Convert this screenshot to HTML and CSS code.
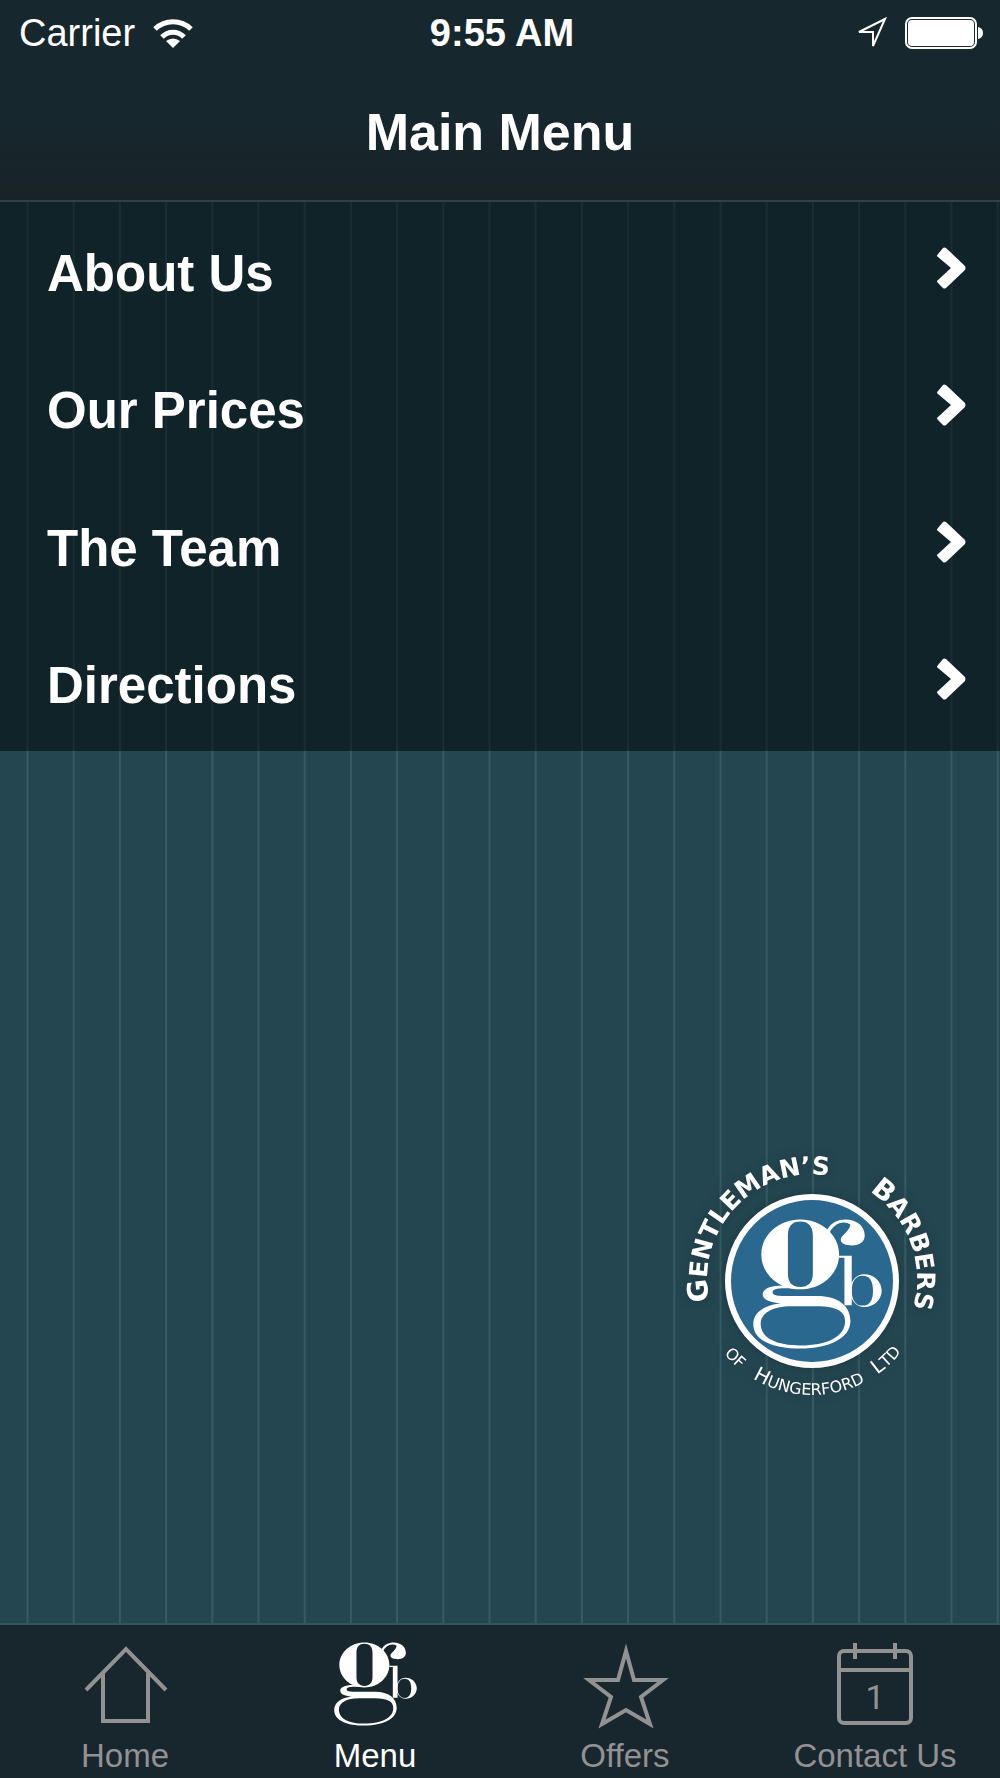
FILE: index.html
```
<!DOCTYPE html>
<html lang="en">
  <head>
    <meta charset="UTF-8" />
    <meta name="viewport" content="width=device-width, initial-scale=1.0" />
    <title>Main Menu</title>
    <link rel="stylesheet" href="styles.css">
  </head>
  <body>
    <svg class="defs" aria-hidden="true">
      <symbol id="gb" viewBox="248 236 388 390">
        <path fill-rule="evenodd" d="M390 237C455 237 507 284 507 342S455 447 390 447 273 400 273 342 325 237 390 237ZM390 243C366 243 353 257 353 285V400C353 426 366 440 390 440S428 426 428 400V285C428 257 414 243 390 243Z" />
        <path d="M468 276C478 246 505 237 526 237 565 237 584 262 584 285 584 304 568 315 546 315 527 315 512 310 512 298 512 284 537 275 541 252 520 238 488 248 475 284Z" />
        <path fill-rule="evenodd" d="M370 437C305 430 277 444 277 462 277 480 305 488 332 489 280 495 249 517 249 552 249 602 310 625 390 625 480 625 541 592 541 543 541 497 505 467 440 467H335C315 467 307 463 307 456 307 446 325 442 370 445ZM365 498C305 498 271 520 271 550 271 595 320 616 390 616 470 616 525 590 525 543 525 514 500 498 440 498Z" />
        <path d="M507 346H545V495H523V352H507Z" />
        <path fill-rule="evenodd" d="M582 402C612 402 635 424 635 451S612 500 582 500C558 500 540 478 540 451S558 402 582 402ZM578 406C556 406 545 424 545 451S556 496 578 496 609 478 609 451 600 406 578 406Z" />
      </symbol>
      <symbol id="chevron" viewBox="0 0 30 42">
        <path d="M2 7L7 1Q8 0 10 1L29 19Q30 21 29 23L10 41Q8 42 7 41L2 36Q0 34 2 33L15 21L2 10Q0 9 2 7Z" fill="currentColor" />
      </symbol>
    </svg>

    <header class="header">
      <div class="status-bar">
        <div class="carrier">
          <span>Carrier</span>
          <svg width="40" height="32" viewBox="0 0 40 32" fill="none" stroke="currentColor" stroke-width="5">
            <path d="M2 12A26 26 0 0 1 38 12" />
            <path d="M9 20A15 15 0 0 1 31 20" />
            <path d="M20 31L13 24Q20 19 27 24Z" fill="currentColor" stroke="none" />
          </svg>
        </div>
        <span class="time">9:55 AM</span>
        <div class="indicators">
          <svg width="34" height="34" viewBox="0 0 34 34" fill="none" stroke="currentColor" stroke-width="2">
            <path d="M30 3L4 16L18 16L18 30Z" />
          </svg>
          <svg width="80" height="32" viewBox="0 0 80 32">
            <rect x="1" y="1" width="70" height="30" rx="6" fill="none" stroke="currentColor" stroke-width="2" />
            <rect x="3" y="3" width="66" height="26" rx="4" fill="currentColor" />
            <path d="M73 10Q78 11 78 16T73 22Z" fill="currentColor" />
          </svg>
        </div>
      </div>
      <h1>Main Menu</h1>
    </header>

    <nav class="menu">
      <a href="#about">About Us <svg class="chevron"><use href="#chevron" /></svg></a>
      <a href="#prices">Our Prices <svg class="chevron"><use href="#chevron" /></svg></a>
      <a href="#team">The Team <svg class="chevron"><use href="#chevron" /></svg></a>
      <a href="#directions">Directions <svg class="chevron"><use href="#chevron" /></svg></a>
    </nav>

    <main class="content">
      <svg class="logo" viewBox="0 0 280 270">
        <path id="arcTop" d="M60 205A105 105 0 1 1 224 205" fill="none" />
        <path id="arcBottom" d="M28 141A114 114 0 0 0 256 141" fill="none" />
        <circle cx="142" cy="141" r="84" class="logo-disc" />
        <use href="#gb" x="83" y="79" width="129" height="130" />
        <g class="logo-name">
          <text><textPath href="#arcTop" startOffset="32%"><tspan class="cap">G</tspan>ENTLEMAN’S</textPath></text>
          <text><textPath href="#arcTop" startOffset="77%"><tspan class="cap">B</tspan>ARBERS</textPath></text>
        </g>
        <g class="logo-place">
          <text><textPath href="#arcBottom" startOffset="25%">OF</textPath></text>
          <text><textPath href="#arcBottom" startOffset="49%"><tspan class="cap">H</tspan>UNGERFORD</textPath></text>
          <text><textPath href="#arcBottom" startOffset="74%"><tspan class="cap">L</tspan>TD</textPath></text>
        </g>
      </svg>
    </main>

    <nav class="tabs">
      <a href="#home">
        <svg viewBox="0 0 88 88" class="icon line">
          <path d="M5 50L45 9L85 50" />
          <path d="M22 33V81H67V33" />
        </svg>
        Home
      </a>
      <a href="#menu" class="active">
        <svg viewBox="0 0 88 88" class="icon"><use href="#gb" x="3" y="2" width="83" height="84" /></svg>
        Menu
      </a>
      <a href="#offers">
        <svg viewBox="0 0 88 88" class="icon line">
          <path d="M45 11L53 40H82L60 57L69 84L45 70L21 84L30 57L8 40H37Z" />
        </svg>
        Offers
      </a>
      <a href="#contact">
        <svg viewBox="0 0 88 88" class="icon line">
          <rect x="8" y="11" width="72" height="72" rx="5" />
          <path d="M8 30H80M24 3V19M64 3V19" />
          <text x="44" y="69">1</text>
        </svg>
        Contact Us
      </a>
    </nav>
  </body>
</html>
```
FILE: styles.css
```
* {
  box-sizing: border-box;
}
body {
  display: flex;
  flex-direction: column;
  min-height: 100vh;
  margin: 0;
  font-family: "Helvetica Neue", "Liberation Sans", Arial, sans-serif;
  color: #fff;
  background: repeating-linear-gradient(90deg, #234651 0 2.6%, #355b65 2.7% 2.8%, #234651 2.9% 4.62%);
}
a {
  color: inherit;
  text-decoration: none;
}
svg {
  flex: none;
}
.defs {
  position: absolute;
  width: 0;
  height: 0;
}

/* header */
.header {
  background: linear-gradient(#17272e 60%, #182327);
  border-bottom: 2px solid #2f4146;
}
.status-bar {
  display: grid;
  grid-template-columns: 1fr auto 1fr;
  align-items: center;
  height: 66px;
  padding: 0 15px 0 19px;
  font-size: 38px;
  line-height: 66px;
}
.carrier,
.indicators {
  display: flex;
  align-items: center;
  gap: 18px;
}
.indicators {
  justify-content: flex-end;
  gap: 16px;
}
.time {
  font-weight: bold;
}
h1 {
  margin: 0;
  font-size: 52px;
  line-height: 132px;
  padding-bottom: 2px;
  text-align: center;
}

/* menu list */
.menu {
  display: grid;
  grid-auto-rows: 1fr;
  height: 549px;
  background: rgba(0, 3, 4, 0.52);
}
.menu a {
  display: flex;
  align-items: center;
  justify-content: space-between;
  padding: 6px 34px 0 47px;
  font-size: 51px;
  font-weight: bold;
}
.chevron {
  width: 30px;
  height: 42px;
  margin-bottom: 12px;
}

/* logo */
.content {
  display: flex;
  flex: 1;
  align-items: flex-end;
  justify-content: flex-end;
  padding: 0 50px 213px;
}
.logo {
  width: 280px;
  height: 270px;
  fill: #fff;
  font-family: "DejaVu Sans", sans-serif;
  text-anchor: middle;
  filter: drop-shadow(0 0 5px rgba(30, 40, 40, 0.5));
}
.logo-disc {
  fill: #2a6890;
  stroke: #fff;
  stroke-width: 6px;
}
.logo-name {
  font-size: 25px;
  font-weight: bold;
}
.logo-name .cap {
  font-size: 28px;
}
.logo-place {
  font-size: 16px;
}
.logo-place .cap {
  font-size: 20px;
}

/* tab bar */
.tabs {
  display: grid;
  grid-template-columns: repeat(4, 1fr);
  height: 155px;
  border-top: 2px solid #35555e;
  background: #17272d;
}
.tabs a {
  display: flex;
  flex-direction: column;
  align-items: center;
  padding-top: 15px;
  font-size: 33px;
  line-height: 56px;
  color: #929292;
}
.tabs .active {
  color: #fff;
}
.icon {
  width: 88px;
  height: 88px;
  overflow: visible;
  fill: currentColor;
}
.line {
  fill: none;
  stroke: currentColor;
  stroke-width: 4px;
}
.line text {
  font-family: Roboto, sans-serif;
  font-size: 34px;
  text-anchor: middle;
  fill: currentColor;
  stroke: none;
}
```
